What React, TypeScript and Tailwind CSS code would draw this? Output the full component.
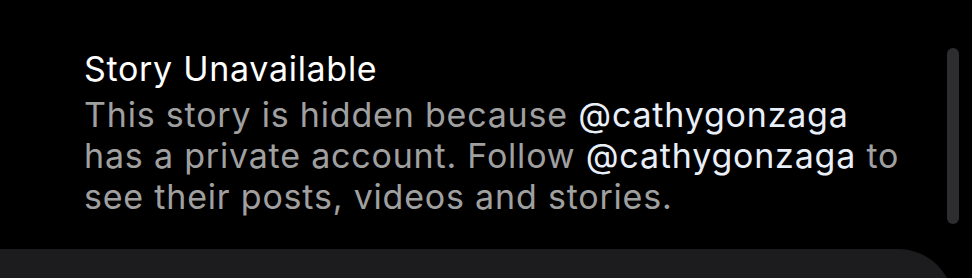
export default function App() {
  const handle = "@cathygonzaga";

  return (
    <div className="relative h-[278px] w-[972px] overflow-hidden bg-black font-['Inter',sans-serif]">
      {/* story message */}
      <div className="h-[249px] pl-[84px] pt-[48px]">
        <h1 className="text-[34px] leading-[41px] font-normal tracking-[0.7px] text-white">
          Story Unavailable
        </h1>
        <p className="mt-[5px] whitespace-nowrap text-[34px] leading-[41px] tracking-[0.8px] text-[#a0a0a0]">
          This story is hidden because{" "}
          <span className="text-[#e9eff9]">{handle}</span>
          <br />
          has a private account. Follow{" "}
          <span className="text-[#e9eff9]">{handle}</span> to
          <br />
          see their posts, videos and stories.
        </p>
      </div>

      {/* bottom sheet */}
      <div className="h-[80px] w-[954px] rounded-tr-[56px] bg-[#1c1c1e]" />

      {/* scroll indicator */}
      <div className="absolute left-[947px] top-[48px] h-[176px] w-[12px] rounded-full bg-[#2d2d2f]" />
    </div>
  );
}
